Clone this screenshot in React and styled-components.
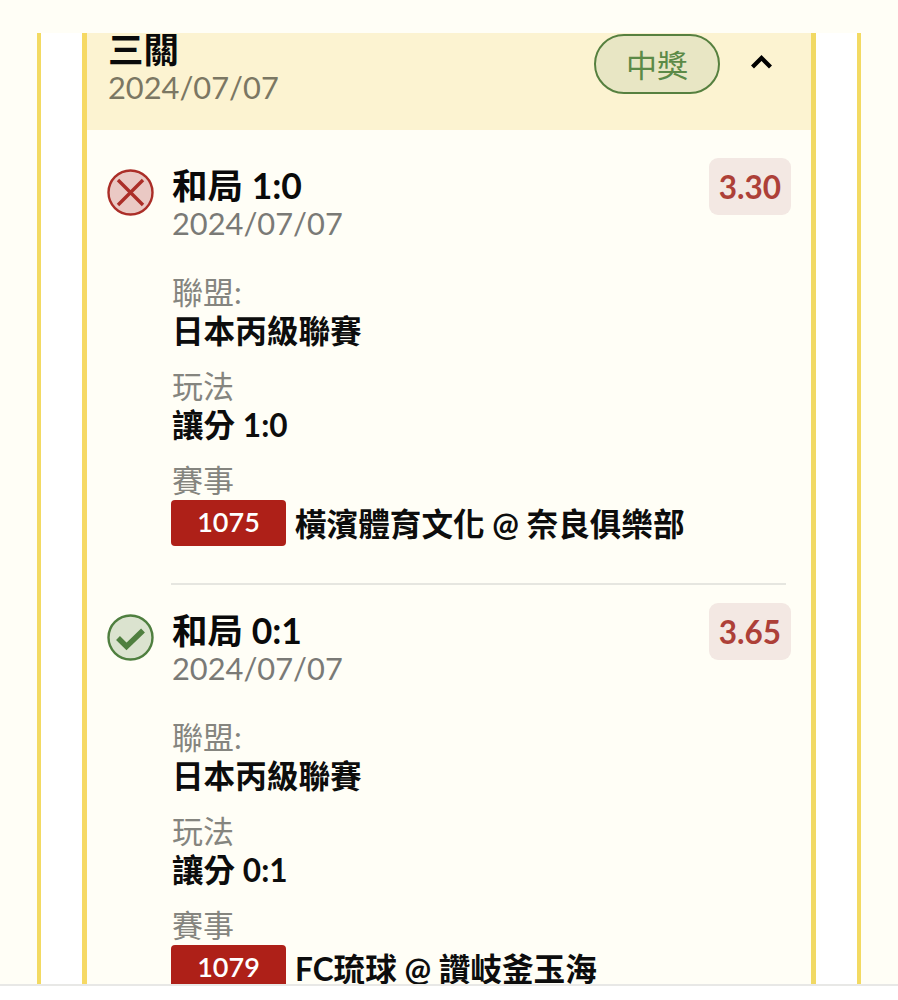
import React from 'react';
import styled, { createGlobalStyle } from 'styled-components';

const GlobalStyle = createGlobalStyle`
  html, body {
    margin: 0;
    padding: 0;
    background: #fffef6;
  }
  * {
    box-sizing: border-box;
  }
`;

const FONT = `Lato, "Noto Sans CJK TC", sans-serif`;

const Page = styled.div`
  display: flex;
  flex-direction: column;
  height: 1000px;
  overflow: hidden;
  background: #fffef6;
  font-family: ${FONT};
`;
const TopGap = styled.div`
  flex: 0 0 33px;
`;
const Viewport = styled.div`
  flex: 0 0 951px;
  overflow: hidden;
`;
const Footer = styled.div`
  flex: 1;
  background: #fff;
  border-top: 2px solid #e8e8e6;
`;
const OuterCard = styled.div`
  margin: -20px 37px 0 37px;
  padding: 0 41px 0 41px;
  background: #fff;
  border-left: 4px solid #f3da62;
  border-right: 4px solid #f3da62;
`;
const InnerCard = styled.div`
  background: #fffef6;
  border-left: 5px solid #f6d964;
  border-right: 5px solid #f1d964;
`;
const Header = styled.div`
  display: flex;
  justify-content: space-between;
  align-items: flex-start;
  height: 117px;
  padding: 17px 39px 0 21px;
  background: #fcf3d1;
`;
const HeaderRight = styled.div`
  display: flex;
  align-items: center;
  gap: 31px;
  margin-top: 4px;
`;
const Pill = styled.div`
  display: flex;
  align-items: center;
  justify-content: center;
  width: 126px;
  height: 60px;
  padding-bottom: 2px;
  border: 2px solid #56803f;
  border-radius: 30px;
  background: #e8e6c4;
  color: #5c8a47;
  font-size: 31px;
`;
const Chevron = styled.svg`
  display: block;
  width: 21px;
  height: 14px;
  margin-top: -4px;
`;
const Title = styled.div`
  color: #0a0a0a;
  font-size: 35.5px;
  font-weight: 700;
  line-height: 40px;
`;
const DateText = styled.div`
  color: ${(p) => (p.$onHeader ? '#7b7763' : '#7a7a76')};
  font-size: 30.8px;
  line-height: 36px;
`;
const List = styled.div`
  padding: 10px 20px 0 20px;
`;
const Bet = styled.div`
  padding-top: 26px;
`;
const BetTop = styled.div`
  display: flex;
  align-items: flex-start;
  gap: 18px;
`;
const StatusIcon = styled.svg`
  flex: 0 0 47px;
  width: 47px;
  height: 47px;
  margin-top: 3px;
`;
const BetHead = styled.div`
  flex: 1;
`;
const Odds = styled.div`
  display: flex;
  align-items: center;
  justify-content: center;
  width: 82px;
  height: 57px;
  margin-top: -8px;
  border-radius: 9px;
  background: #f3e8e3;
  color: #ad4038;
  font-size: 31.5px;
  font-weight: 700;
`;
const Fields = styled.div`
  display: flex;
  flex-direction: column;
  gap: 18px;
  margin: 32px 0 0 65px;
`;
const Label = styled.div`
  padding-bottom: 2px;
  color: #85857f;
  font-size: 31px;
  line-height: 36px;
`;
const Value = styled.div`
  color: #0d0d0d;
  font-size: 31.6px;
  font-weight: 700;
  line-height: 38px;
`;
const Match = styled.div`
  display: flex;
  align-items: center;
  gap: 9px;
  height: 46px;
  color: #0d0d0d;
  font-size: 31.6px;
  font-weight: 700;
`;
const MatchName = styled.span`
  margin-bottom: 3px;
`;
const Code = styled.span`
  display: flex;
  align-items: center;
  justify-content: center;
  width: 115px;
  height: 46px;
  margin-left: -1px;
  padding-bottom: 3px;
  border-radius: 4px;
  background: #ae2018;
  color: #fff;
  font-size: 27px;
  font-weight: 600;
`;
const Divider = styled.div`
  height: 2px;
  margin: 37px 5px 0 64px;
  background: #e6e6e0;
`;

const bets = [
  {
    id: 1,
    won: false,
    title: '和局 1:0',
    odds: '3.30',
    play: '讓分 1:0',
    code: '1075',
    match: '橫濱體育文化 @ 奈良俱樂部',
  },
  {
    id: 2,
    won: true,
    title: '和局 0:1',
    odds: '3.65',
    play: '讓分 0:1',
    code: '1079',
    match: 'FC琉球 @ 讚岐釜玉海',
  },
];

function ResultIcon({ won }) {
  if (won) {
    return (
      <StatusIcon viewBox="0 0 47 47">
        <circle cx="23.5" cy="23.5" r="22" fill="#dbe3cf" stroke="#4f7f3f" strokeWidth="2.4" />
        <path d="M11 24 L19.5 32.5 L36 16.5" fill="none" stroke="#4f7f3f" strokeWidth="5.5" />
      </StatusIcon>
    );
  }
  return (
    <StatusIcon viewBox="0 0 47 47">
      <circle cx="23.5" cy="23.5" r="22" fill="#eac9c4" stroke="#ab2e28" strokeWidth="2.4" />
      <path d="M11 11 L36 36 M36 11 L11 36" fill="none" stroke="#ab2e28" strokeWidth="3.4" />
    </StatusIcon>
  );
}

function App() {
  return (
    <Page>
      <GlobalStyle />
      <TopGap />
      <Viewport>
        <OuterCard>
          <InnerCard>
            <Header>
              <div>
                <Title>三關</Title>
                <DateText $onHeader>2024/07/07</DateText>
              </div>
              <HeaderRight>
                <Pill>中獎</Pill>
                <Chevron viewBox="0 0 21 14">
                  <path d="M1.5 12 L10.5 3 L19.5 12" fill="none" stroke="#000" strokeWidth="4.2" />
                </Chevron>
              </HeaderRight>
            </Header>
            <List>
              {bets.map((bet, index) => (
                <Bet key={bet.id}>
                  <BetTop>
                    <ResultIcon won={bet.won} />
                    <BetHead>
                      <Title>{bet.title}</Title>
                      <DateText>2024/07/07</DateText>
                    </BetHead>
                    <Odds>{bet.odds}</Odds>
                  </BetTop>
                  <Fields>
                    <div>
                      <Label>聯盟:</Label>
                      <Value>日本丙級聯賽</Value>
                    </div>
                    <div>
                      <Label>玩法</Label>
                      <Value>{bet.play}</Value>
                    </div>
                    <div>
                      <Label>賽事</Label>
                      <Match>
                        <Code>{bet.code}</Code>
                        <MatchName>{bet.match}</MatchName>
                      </Match>
                    </div>
                  </Fields>
                  {index === 0 && <Divider />}
                </Bet>
              ))}
            </List>
          </InnerCard>
        </OuterCard>
      </Viewport>
      <Footer />
    </Page>
  );
}

export default App;
